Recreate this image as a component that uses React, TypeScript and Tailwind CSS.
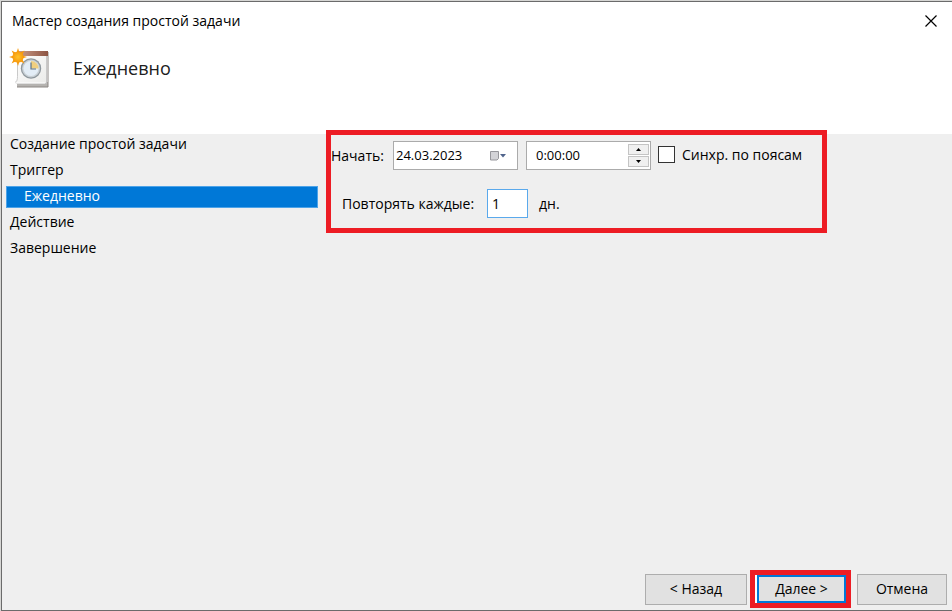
import { useState } from 'react';
import clsx from 'clsx';

interface Step {
  label: string;
  nested?: boolean;
}

const steps: Step[] = [
  { label: 'Создание простой задачи' },
  { label: 'Триггер' },
  { label: 'Ежедневно', nested: true },
  { label: 'Действие' },
  { label: 'Завершение' },
];

function TaskIcon() {
  return (
    <svg viewBox="0 0 40 40" className="size-10 shrink-0" aria-hidden="true">
      <defs>
        <linearGradient id="paper" x1="0" y1="0" x2="1" y2="1">
          <stop offset="0" stopColor="#ffffff" />
          <stop offset="1" stopColor="#ebebe9" />
        </linearGradient>
        <linearGradient id="strip" x1="0" y1="0" x2="1" y2="0">
          <stop offset="0" stopColor="#c99a86" />
          <stop offset="1" stopColor="#8d5443" />
        </linearGradient>
        <radialGradient id="sun">
          <stop offset="0" stopColor="#ffc22b" />
          <stop offset="1" stopColor="#f79a0c" />
        </radialGradient>
      </defs>
      <path d="M8 34h31v5H8z" fill="#b5b3b0" />
      <path d="M8 39h31V4" fill="none" stroke="#8c8784" />
      <path d="M8.500 3.500h29v32H8l-2-1c2-1 2.500-3 2.500-6z" fill="url(#paper)" stroke="#bdbdbd" strokeWidth="0.8" />
      <path d="M6 35h30" stroke="#ffffff" />
      <path d="M10 3h29v5H10z" fill="url(#strip)" />
      <circle cx="22" cy="20.500" r="10.200" fill="#8e979d" />
      <circle cx="22" cy="20.500" r="9" fill="#c9d0d5" />
      <circle cx="22" cy="20.500" r="7.600" fill="#e3edf6" />
      <path d="M22 20.500v-7.600a7.600 7.600 0 0 1 7.600 7.600z" fill="#f0cf80" />
      <path d="M22 14.500v6.500h5" fill="none" stroke="#5d7388" strokeWidth="1.200" />
      <path
        d="M9 0l1.600 5 4.800-2.400-2.400 4.800 5 1.600-5 1.600 2.400 4.800-4.800-2.400L9 18l-1.600-5-4.800 2.400L5 10.600 0 9l5-1.600-2.400-4.800L7.400 5z"
        fill="#f79a0c"
      />
      <circle cx="9" cy="9" r="5.600" fill="url(#sun)" />
    </svg>
  );
}

export default function App() {
  const [date, setDate] = useState('24.03.2023');
  const [time, setTime] = useState('0:00:00');
  const [days, setDays] = useState('1');
  const [sync, setSync] = useState(false);

  const shiftHour = (by: number) => {
    const [h, m, s] = time.split(':');
    setTime(`${(Number(h) + by + 24) % 24}:${m}:${s}`);
  };

  return (
    <div className="flex min-h-screen flex-col bg-[#d6d6d4] pt-px pl-px font-['Open_Sans','Noto_Sans',sans-serif] text-sm text-black">
      <div className="flex flex-1 flex-col border-t border-b border-l border-[#6b6b6b] bg-[#efefef]">
        <header className="h-[132px] bg-white">
          <div className="flex h-[38px] items-center justify-between pr-[14px] pl-[10px]">
            <h1 className="text-sm">Мастер создания простой задачи</h1>
            <button type="button" aria-label="Закрыть" className="p-px">
              <svg viewBox="0 0 12 12" className="size-3" fill="none" stroke="black" strokeWidth="1.200">
                <path d="M0.500 0.500l11 11M11.500 0.500l-11 11" />
              </svg>
            </button>
          </div>
          <div className="flex items-center gap-6 pt-2 pl-[7px]">
            <TaskIcon />
            <h2 className="text-lg text-[#202020]">Ежедневно</h2>
          </div>
        </header>

        <main className="flex flex-1 items-start gap-2">
          <ol className="flex w-[316px] shrink-0 flex-col gap-1 pl-1">
            {steps.map((step) => (
              <li
                key={step.label}
                aria-current={step.nested ? 'step' : undefined}
                className={clsx(
                  'flex h-[22px] items-center pb-[2px]',
                  step.nested ? 'border border-[#4da3e8] bg-[#0078d7] pl-[17px] text-white' : 'pl-1',
                )}
              >
                {step.label}
              </li>
            ))}
          </ol>

          <form className="-mt-1 flex h-[103px] w-[501px] flex-col gap-[19px] border-[5px] border-[#ed1c24] pt-[6px]">
            <div className="flex items-center">
              <label htmlFor="date" className="w-[62px] shrink-0">
                Начать:
              </label>
              <div className="flex h-[29px] w-[125px] shrink-0 items-center border border-[#ababab] bg-white">
                <input
                  id="date"
                  value={date}
                  onChange={(e) => setDate(e.target.value)}
                  className="w-[95px] pl-[2px] text-[13px] outline-none"
                />
                <button type="button" aria-label="Календарь">
                  <svg viewBox="0 0 18 12" className="h-3 w-[18px]">
                    <path d="M1.500 1.500h8v7l-1.500 1.500H1.500z" fill="#d3d3d7" stroke="#96969b" />
                    <path d="M11 4h6l-3 3.500z" fill="#50648c" />
                  </svg>
                </button>
              </div>
              <div className="ml-2 flex h-[29px] w-[125px] shrink-0 items-center border border-[#ababab] bg-white">
                <input
                  aria-label="Время"
                  value={time}
                  onChange={(e) => setTime(e.target.value)}
                  className="w-[101px] pl-[9px] text-[13px] outline-none"
                />
                <div className="flex flex-col gap-px">
                  <button
                    type="button"
                    aria-label="Больше"
                    onClick={() => shiftHour(1)}
                    className="flex h-[11px] w-[21px] items-center justify-center border border-[#c4c4c4] bg-[#f0f0f0]"
                  >
                    <svg viewBox="0 0 5 3" className="h-[3px] w-[5px]">
                      <path d="M0 3L2.500 0 5 3z" />
                    </svg>
                  </button>
                  <button
                    type="button"
                    aria-label="Меньше"
                    onClick={() => shiftHour(-1)}
                    className="flex h-[11px] w-[21px] items-center justify-center border border-[#c4c4c4] bg-[#f0f0f0]"
                  >
                    <svg viewBox="0 0 5 3" className="h-[3px] w-[5px]">
                      <path d="M0 0l2.500 3L5 0z" />
                    </svg>
                  </button>
                </div>
              </div>
              <label className="ml-[7px] flex items-center gap-[7px] pb-[2px] whitespace-nowrap">
                <input
                  type="checkbox"
                  checked={sync}
                  onChange={(e) => setSync(e.target.checked)}
                  className="size-[17px] appearance-none border border-[#333333] bg-white checked:bg-[#0078d7]"
                />
                Синхр. по поясам
              </label>
            </div>

            <div className="flex items-center pl-[11px]">
              <label htmlFor="days" className="w-[145px] shrink-0">
                Повторять каждые:
              </label>
              <input
                id="days"
                value={days}
                onChange={(e) => setDays(e.target.value)}
                className="h-[29px] w-[41px] border border-[#5aa9ec] bg-white pl-1 outline-none"
              />
              <span className="ml-[11px]">дн.</span>
            </div>
          </form>
        </main>

        <footer className="flex items-center justify-end pr-[5px] pb-[2px]">
          <button type="button" className="h-[31px] w-[102px] border border-[#adadad] bg-[#e1e1e1]">
            &lt; Назад
          </button>
          <div className="ml-[3px] border-[5px] border-[#ed1c24] bg-white pl-[2px]">
            <button type="button" className="block h-7 w-[89px] border-2 border-[#0078d7] bg-[#e1e1e1]">
              Далее &gt;
            </button>
          </div>
          <button type="button" className="ml-[6px] h-[31px] w-[90px] border border-[#adadad] bg-[#e1e1e1]">
            Отмена
          </button>
        </footer>
      </div>
    </div>
  );
}
